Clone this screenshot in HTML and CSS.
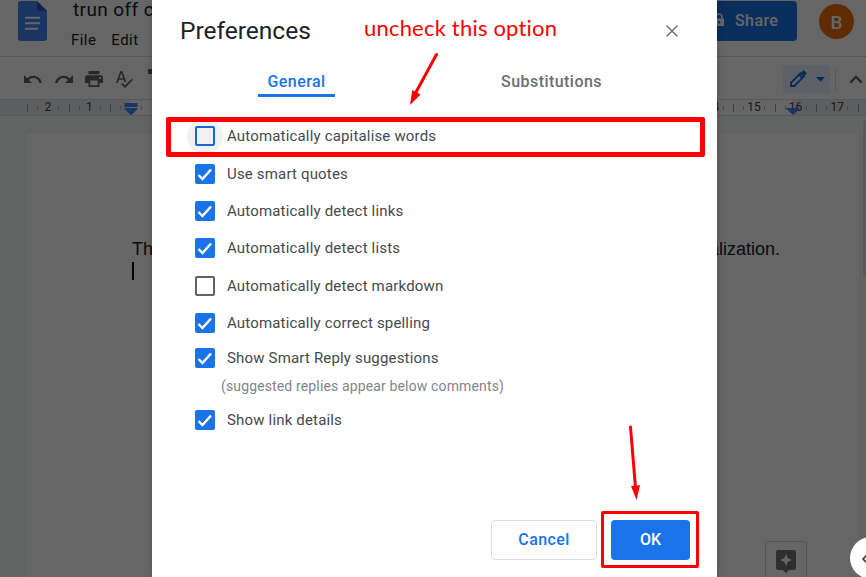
FILE: index.html
```html
<!DOCTYPE html>
<html lang="en">
    <head>
        <meta charset="UTF-8" />
        <meta name="viewport" content="width=device-width, initial-scale=1.0" />
        <title>Preferences</title>
        <link rel="stylesheet" href="styles.css">
    </head>
    <body>
        <!-- editor behind the dialog -->
        <div class="editor">
            <header class="header">
                <svg class="doc-icon" width="29" height="40" viewBox="0 0 29 40">
                    <path d="M3 0H19L29 10V37a3 3 0 0 1-3 3H3a3 3 0 0 1-3-3V3a3 3 0 0 1 3-3z" fill="#4285f4" />
                    <path d="M19 0V8a2 2 0 0 0 2 2H29z" fill="#2a56c6" />
                    <path d="M7 16.800H22M7 22.300H22M7 27.800H20" stroke="#fff" stroke-width="2" />
                </svg>
                <div class="doc-info">
                    <div class="doc-title">trun off c</div>
                    <nav class="menu">
                        <span>File</span>
                        <span>Edit</span>
                    </nav>
                </div>
                <button class="share">
                    <svg width="12" height="14" viewBox="0 0 12 14">
                        <path d="M3 6V4a3 3 0 0 1 6 0v2" fill="none" stroke="#fff" stroke-width="1.500" />
                        <path fill-rule="evenodd" d="M1 5.500H11V13H1zM6 8a1.300 1.300 0 1 0 .01 0z" fill="#fff" />
                    </svg>
                    Share
                </button>
                <div class="avatar">B</div>
            </header>

            <div class="toolbar">
                <svg width="18" height="9" viewBox="0 0 18 9">
                    <path d="M0 0V8H8L5 5C9 1.500 14 3 15.500 8.300L18 7.500C15.500 0 8 -1 3.200 3.200z" fill="#5f6368" />
                </svg>
                <svg width="18" height="9" viewBox="0 0 18 9">
                    <path d="M18 0V8H10L13 5C9 1.500 4 3 2.500 8.300L0 7.500C2.500 0 10 -1 14.800 3.200z" fill="#5f6368" />
                </svg>
                <svg width="18" height="16" viewBox="0 0 18 16">
                    <path fill-rule="evenodd" d="M3.500 0H14.500V3.300H3.500zM2.500 4.200H15.500A2.500 2.500 0 0 1 18 6.700V12H14.500V16H3.500V12H0V6.700A2.500 2.500 0 0 1 2.500 4.200zM5.300 9.500V14.200H12.700V9.500zM14.200 6.200V8H16V6.200z" fill="#5f6368" />
                </svg>
                <svg width="17" height="17" viewBox="0 0 17 17">
                    <path d="M.8 12L4.800 1H5.800L9.500 11M2.200 8H8.500M5.800 12.500L9 15.700L16.300 8.300" fill="none" stroke="#5f6368" stroke-width="1.700" />
                </svg>
                <svg class="paint" width="14" height="16" viewBox="0 0 14 16">
                    <path d="M0 0H11V5H0zM11 2H13V8H6V15" fill="#5f6368" />
                </svg>
                <div class="mode">
                    <svg width="18" height="18" viewBox="0 0 18 18">
                        <path d="M2 16V12.700L11.700 3L15 6.300L5.300 16zM10 4.700L13.300 8" fill="none" stroke="#1967d2" stroke-width="1.800" />
                        <path d="M12.300 2.300L14 .7a1 1 0 0 1 1.400 0L17.300 2.600a1 1 0 0 1 0 1.400L15.700 5.700z" fill="#1967d2" />
                    </svg>
                    <svg width="9" height="5" viewBox="0 0 9 5">
                        <path d="M0 0H9L4.500 4.500z" fill="#1967d2" />
                    </svg>
                </div>
                <div class="divider"></div>
                <svg width="14" height="9" viewBox="0 0 14 9">
                    <path d="M1.300 7.700L7 2L12.700 7.700" fill="none" stroke="#5f6368" stroke-width="2.400" />
                </svg>
            </div>

            <div class="ruler">
                <div class="cell margin">2</div>
                <div class="cell margin">1</div>
                <div class="cell first"></div>
                <div class="cell">1</div>
                <div class="cell">2</div>
                <div class="cell">3</div>
                <div class="cell">4</div>
                <div class="cell">5</div>
                <div class="cell">6</div>
                <div class="cell">7</div>
                <div class="cell">8</div>
                <div class="cell">9</div>
                <div class="cell">10</div>
                <div class="cell">11</div>
                <div class="cell">12</div>
                <div class="cell">13</div>
                <div class="cell">14</div>
                <div class="cell">15</div>
                <div class="cell last">16</div>
                <div class="cell margin">17</div>
                <div class="cell margin"></div>
                <svg class="indent left" width="14" height="13" viewBox="0 0 14 13">
                    <path d="M.5 0H13.500V4H.5zM.5 5H13.500V6L7 12.500L.5 6z" fill="#4285f4" />
                </svg>
                <svg class="indent right" width="14" height="7" viewBox="0 0 14 7">
                    <path d="M.5 0H13.500V1L7 7L.5 1z" fill="#4285f4" />
                </svg>
            </div>

            <div class="canvas">
                <div class="page">
                    <div class="line">
                        <span>This</span>
                        <span>capitalization.</span>
                    </div>
                    <div class="caret"></div>
                </div>
                <div class="scrollbar"></div>
                <div class="explore">
                    <svg width="20" height="23" viewBox="0 0 20 23">
                        <path fill-rule="evenodd" d="M2 0H18a2 2 0 0 1 2 2V18a2 2 0 0 1-2 2H13L10 23L7 20H2a2 2 0 0 1-2-2V2a2 2 0 0 1 2-2zM10 4L8.200 8.300L4 10L8.200 11.700L10 16L11.800 11.700L16 10L11.800 8.300z" fill="#757575" />
                    </svg>
                </div>
            </div>
        </div>

        <div class="backdrop"></div>

        <div class="side-toggle">
            <svg width="8" height="10" viewBox="0 0 8 10">
                <path d="M6 1L2 5L6 9" fill="none" stroke="#444" stroke-width="1.700" />
            </svg>
        </div>

        <!-- preferences dialog -->
        <div class="dialog">
            <div class="dialog-head">
                <h1>Preferences</h1>
                <svg width="12" height="12" viewBox="0 0 12 12">
                    <path d="M.5 .5L11.500 11.500M11.500 .5L.5 11.500" stroke="#70757a" stroke-width="1.500" />
                </svg>
            </div>

            <div class="tabs">
                <div class="tab active"><span>General</span></div>
                <div class="tab"><span>Substitutions</span></div>
            </div>

            <div class="options">
                <div class="option">
                    <span class="box focus"></span>
                    <span>Automatically capitalise words</span>
                </div>
                <div class="option">
                    <span class="box checked"><svg viewBox="0 0 20 20"><path d="M3.500 11L7.500 15L16 5.500" /></svg></span>
                    <span>Use smart quotes</span>
                </div>
                <div class="option">
                    <span class="box checked"><svg viewBox="0 0 20 20"><path d="M3.500 11L7.500 15L16 5.500" /></svg></span>
                    <span>Automatically detect links</span>
                </div>
                <div class="option">
                    <span class="box checked"><svg viewBox="0 0 20 20"><path d="M3.500 11L7.500 15L16 5.500" /></svg></span>
                    <span>Automatically detect lists</span>
                </div>
                <div class="option">
                    <span class="box"></span>
                    <span>Automatically detect markdown</span>
                </div>
                <div class="option">
                    <span class="box checked"><svg viewBox="0 0 20 20"><path d="M3.500 11L7.500 15L16 5.500" /></svg></span>
                    <span>Automatically correct spelling</span>
                </div>
                <div class="option reply">
                    <span class="box checked"><svg viewBox="0 0 20 20"><path d="M3.500 11L7.500 15L16 5.500" /></svg></span>
                    <span>Show Smart Reply suggestions</span>
                </div>
                <div class="hint">(suggested replies appear below comments)</div>
                <div class="option">
                    <span class="box checked"><svg viewBox="0 0 20 20"><path d="M3.500 11L7.500 15L16 5.500" /></svg></span>
                    <span>Show link details</span>
                </div>
            </div>

            <div class="actions">
                <button class="cancel">Cancel</button>
                <button class="ok">OK</button>
            </div>
        </div>

        <!-- red notes -->
        <div class="note">uncheck this option</div>
        <div class="frame frame-option"></div>
        <div class="frame frame-ok"></div>
        <svg class="arrows" width="866" height="577" viewBox="0 0 866 577">
            <path d="M436.500 54.500L415 94M630.500 427L635.500 488" fill="none" stroke="#f00" stroke-width="3" stroke-linecap="round" />
            <path d="M410 105L412.300 90L420.500 94.500zM636.500 500L631 486L640 485.300z" fill="#f00" />
        </svg>
    </body>
</html>
```
FILE: styles.css
```css
* {
    box-sizing: border-box;
}

body {
    margin: 0;
    height: 577px;
    position: relative;
    overflow: hidden;
    font-family: Roboto, "Liberation Sans", sans-serif;
}

svg {
    display: block;
    flex-shrink: 0;
}

button {
    font-family: inherit;
}

.editor {
    height: 577px;
    display: flex;
    flex-direction: column;
    background-color: #fff;
}

/* header */
.header {
    height: 57px;
    padding: 1px 12px 0 18px;
    display: flex;
    align-items: flex-start;
    border-bottom: 1px solid #dadce0;
}

.doc-info {
    margin-left: 24px;
    flex: 1;
}

.doc-title {
    margin-top: -3px;
    padding-left: 2px;
    font-size: 19px;
    line-height: 24px;
    letter-spacing: 0.4px;
    color: #202124;
}

.menu {
    display: flex;
    gap: 15px;
    margin-top: 7px;
    font-size: 15px;
    line-height: 22px;
    letter-spacing: 0.45px;
    color: #202124;
}

.share {
    width: 101px;
    height: 40px;
    padding: 0 0 2px 17px;
    display: flex;
    align-items: center;
    gap: 10px;
    border: none;
    border-radius: 4px;
    background-color: #1a73e8;
    color: #fff;
    font-size: 16px;
    font-weight: 500;
    letter-spacing: 0.4px;
}

.avatar {
    width: 35px;
    height: 35px;
    margin: 3px 0 0 22px;
    border-radius: 50%;
    background-color: #ef6c00;
    color: #fff;
    font-size: 19px;
    font-weight: 500;
    line-height: 37px;
    text-align: center;
}

/* toolbar */
.toolbar {
    height: 42px;
    padding: 2px 3px 0 24px;
    display: flex;
    align-items: center;
    gap: 12.6px;
}

.paint {
    margin: -4px 0 0 3px;
}

.mode {
    width: 47px;
    height: 29px;
    margin-left: auto;
    padding: 0 5px 0 6px;
    display: flex;
    align-items: center;
    justify-content: space-between;
    border-radius: 4px;
    background-color: #e8f0fe;
}

.divider {
    width: 1px;
    height: 22px;
    margin: 0 0 0 -7px;
    background-color: #dadce0;
}

/* ruler */
.ruler {
    position: relative;
    height: 17px;
    padding-left: 27px;
    display: flex;
    overflow: hidden;
    border-top: 1px solid #dadce0;
    border-bottom: 1px solid #dadce0;
    background-color: #e8eaed;
}

.cell {
    flex: 0 0 41.56px;
    background:
        linear-gradient(#9aa0a6, #9aa0a6) 0 4px / 1px 8px no-repeat,
        linear-gradient(#b0b4b9, #b0b4b9) 10px 6px / 1px 4px no-repeat,
        linear-gradient(#b0b4b9, #b0b4b9) 31px 6px / 1px 4px no-repeat,
        #fff;
    font-size: 12px;
    line-height: 15px;
    text-align: center;
    color: #444;
}

.cell.margin {
    background-color: #e8eaed;
}

.cell.first {
    background-image:
        linear-gradient(#9aa0a6, #9aa0a6),
        linear-gradient(#b0b4b9, #b0b4b9),
        linear-gradient(#b0b4b9, #b0b4b9),
        linear-gradient(to right, #e8eaed 20px, #fff 20px);
    background-position: 0 4px, 10px 6px, 31px 6px, 0 0;
    background-size: 1px 8px, 1px 4px, 1px 4px, 100% 100%;
    background-repeat: no-repeat;
}

.cell.last {
    background-image:
        linear-gradient(#9aa0a6, #9aa0a6),
        linear-gradient(#b0b4b9, #b0b4b9),
        linear-gradient(#b0b4b9, #b0b4b9),
        linear-gradient(to right, #fff 18px, #e8eaed 18px);
    background-position: 0 4px, 10px 6px, 31px 6px, 0 0;
    background-size: 1px 8px, 1px 4px, 1px 4px, 100% 100%;
    background-repeat: no-repeat;
}

.indent {
    position: absolute;
}

.indent.left {
    left: 124px;
    top: 3px;
}

.indent.right {
    left: 786px;
    top: 8px;
}

/* document */
.canvas {
    position: relative;
    flex: 1;
    padding: 17px 7px 0 26px;
    background-color: #f5f8f7;
}

.page {
    height: 100%;
    padding: 105px 79px 0 106px;
    background-color: #fff;
    box-shadow: 0 0 2px 1px #eceff0;
}

.line {
    display: flex;
    justify-content: space-between;
    font-family: "Liberation Sans", Arial, sans-serif;
    font-size: 18px;
    line-height: 23px;
    color: #222;
}

.caret {
    width: 2px;
    height: 18px;
    margin-top: 1px;
    background-color: #000;
}

.scrollbar {
    position: absolute;
    top: 4px;
    right: 0;
    width: 3px;
    height: 156px;
    border-radius: 3px 0 0 3px;
    background-color: #dadce0;
}

.explore {
    position: absolute;
    left: 765px;
    bottom: -6px;
    width: 42px;
    height: 42px;
    padding: 8px 10px;
    border: 1px solid #d0d0d0;
    border-radius: 3px;
    background-color: #fff;
}

.backdrop {
    position: absolute;
    inset: 0;
    background-color: rgba(0, 0, 0, 0.6);
}

.side-toggle {
    position: absolute;
    left: 850px;
    top: 537px;
    width: 42px;
    height: 42px;
    padding: 17px 0 0 11px;
    border-radius: 50%;
    background-color: #fff;
}

/* dialog */
.dialog {
    position: absolute;
    left: 152px;
    top: 0;
    width: 565px;
    height: 577px;
    display: flex;
    flex-direction: column;
    background-color: #fff;
    box-shadow: 0 0 8px rgba(0, 0, 0, 0.2);
}

.dialog-head {
    height: 61px;
    padding: 0 39px 0 28px;
    display: flex;
    align-items: center;
    justify-content: space-between;
}

.dialog-head h1 {
    margin: 0;
    font-size: 24.5px;
    font-weight: 400;
    line-height: 30px;
    color: #202124;
}

.tabs {
    height: 36px;
    padding-left: 17px;
    display: flex;
}

.tab {
    width: 255px;
    display: flex;
    justify-content: center;
    font-size: 16px;
    font-weight: 500;
    line-height: 41px;
    letter-spacing: 0.45px;
    color: #6b6f74;
}

.tab.active span {
    padding: 0 9px;
    border-bottom: 3px solid #1a73e8;
    border-radius: 3px 3px 0 0;
    color: #1a73e8;
}

.options {
    padding: 20px 0 0 43px;
}

.option {
    position: relative;
    z-index: 0;
    height: 37.3px;
    display: flex;
    align-items: center;
    gap: 12px;
    font-size: 15px;
    letter-spacing: 0.17px;
    color: #45494d;
}

.option:first-child {
    height: 38px;
}

.box {
    position: relative;
    width: 20px;
    height: 20px;
    border: 2px solid #5f6368;
    border-radius: 2px;
}

.box.focus {
    border-color: #1967d2;
}

.box.focus::before {
    content: "";
    position: absolute;
    z-index: -1;
    inset: -10px;
    border-radius: 50%;
    background-color: #f1f1f1;
}

.box.checked {
    border: none;
    background-color: #1a73e8;
}

.box path {
    fill: none;
    stroke: #fff;
    stroke-width: 2.4;
}

.option.reply {
    height: 33px;
}

.hint {
    margin-bottom: 3px;
    padding-left: 26px;
    font-size: 14px;
    line-height: 24px;
    letter-spacing: 0.14px;
    color: #80868b;
}

.actions {
    margin-top: auto;
    padding: 0 27px 17px 0;
    display: flex;
    justify-content: flex-end;
    gap: 14px;
}

.actions button {
    height: 40px;
    padding: 0 0 2px;
    border-radius: 4px;
    font-size: 16px;
    font-weight: 500;
    letter-spacing: 0.4px;
}

.cancel {
    width: 106px;
    border: 1px solid #dadce0;
    background-color: #fff;
    color: #1a73e8;
}

.actions .ok {
    width: 79px;
    border: none;
    background-color: #1a73e8;
    color: #fff;
    letter-spacing: 0;
}

/* notes */
.note {
    position: absolute;
    left: 364px;
    top: 13px;
    font-family: Lato, "Open Sans", sans-serif;
    font-size: 22px;
    line-height: 30px;
    letter-spacing: 0.2px;
    white-space: nowrap;
    color: #f00;
}

.frame {
    position: absolute;
    border: 3px solid #f00;
    border-radius: 2px;
}

.frame-option {
    left: 166px;
    top: 117px;
    width: 539px;
    height: 40px;
    border-width: 5px;
}

.frame-ok {
    left: 601px;
    top: 511px;
    width: 98px;
    height: 57px;
}

.arrows {
    position: absolute;
    left: 0;
    top: 0;
}
```
